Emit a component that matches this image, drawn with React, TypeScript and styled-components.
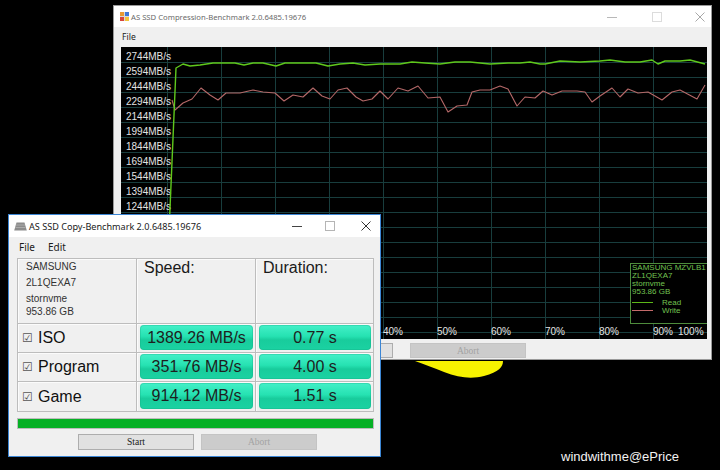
import React from 'react';
import styled, { createGlobalStyle } from 'styled-components';

const Global = createGlobalStyle`
  html, body { margin: 0; padding: 0; background: #000; }
  #root { width: 720px; height: 470px; }
`;

const Desktop = styled.div`
  position: relative;
  width: 720px;
  height: 470px;
  background: #000;
  overflow: hidden;
  font-family: "Liberation Sans", Arial, sans-serif;
`;

const Window = styled.div<{ $left: number; $top: number; $w: number; $h: number; $active?: boolean }>`
  position: absolute;
  left: ${p => p.$left}px;
  top: ${p => p.$top}px;
  width: ${p => p.$w}px;
  height: ${p => p.$h}px;
  box-sizing: border-box;
  background: #f0f0f0;
  border: 1px solid ${p => (p.$active ? '#3c86d4' : '#9a9a9a')};
  display: flex;
  flex-direction: column;
`;

const TitleBar = styled.div<{ $h: number; $pl: number }>`
  flex: none;
  height: ${p => p.$h}px;
  background: #fff;
  display: flex;
  align-items: center;
  padding-left: ${p => p.$pl}px;
`;

const TitleText = styled.span<{ $size: number; $color: string }>`
  margin-left: 2px;
  font-family: "Noto Sans", "Open Sans", sans-serif;
  font-size: ${p => p.$size}px;
  color: ${p => p.$color};
  white-space: nowrap;
`;

const Caption = styled.div<{ $pr: number }>`
  margin-left: auto;
  display: flex;
  align-items: center;
  padding-right: ${p => p.$pr}px;
`;

const CapIcon = styled.svg<{ $ml: number }>`
  display: block;
  margin-left: ${p => p.$ml}px;
`;

const MenuBar = styled.div<{ $h: number; $pl: number; $size: number }>`
  flex: none;
  height: ${p => p.$h}px;
  display: flex;
  align-items: center;
  gap: 13px;
  padding-left: ${p => p.$pl}px;
  font-family: "Noto Sans", "Open Sans", sans-serif;
  font-size: ${p => p.$size}px;
  color: #1a1a1a;
`;

const ChartBox = styled.div`
  flex: none;
  margin: 1px 0 0 7px;
  width: 586px;
  height: 292px;
  background: #000;
  svg { display: block; }
`;

const ButtonStrip = styled.div<{ $pl: number; $pt: number; $gap: number }>`
  display: flex;
  padding-left: ${p => p.$pl}px;
  padding-top: ${p => p.$pt}px;
  gap: ${p => p.$gap}px;
`;

const WinButton = styled.div<{ $disabled?: boolean; $h: number }>`
  width: 116px;
  height: ${p => p.$h}px;
  box-sizing: border-box;
  border: 1px solid ${p => (p.$disabled ? '#c4c4c4' : '#adadad')};
  background: ${p => (p.$disabled ? '#cccccc' : '#e1e1e1')};
  color: ${p => (p.$disabled ? '#a3a3a3' : '#1a1a1a')};
  font-family: "Liberation Serif", "Times New Roman", serif;
  font-size: 9.5px;
  display: flex;
  align-items: center;
  justify-content: center;
`;

const Content = styled.div`
  display: flex;
  flex-direction: column;
  padding: 2px 6px 0 8px;
`;

const Table = styled.div`
  display: grid;
  grid-template-columns: 118px 118px 117px;
  grid-template-rows: 64px 28px 28px 29px;
  gap: 1px;
  padding: 1px;
  background: #bdbdbd;
`;

const Cell = styled.div`
  background: #f0f0f0;
  box-shadow: inset 1px 1px 0 #fbfbfb;
  display: flex;
  box-sizing: border-box;
`;

const InfoCell = styled(Cell)`
  flex-direction: column;
  padding-left: 8px;
  font-size: 10px;
  color: #333;
  line-height: 16px;
`;

const InfoLast = styled.div`
  margin-top: -3px;
`;

const HeadCell = styled(Cell)`
  padding-left: 7px;
  font-size: 16px;
  line-height: 18px;
  color: #1a1a1a;
`;

const RowLabel = styled(Cell)`
  align-items: center;
  padding-left: 4px;
  font-size: 16px;
  color: #111;
`;

const Check = styled.span`
  font-family: "DejaVu Sans", sans-serif;
  font-size: 12px;
  color: #555;
  width: 16px;
`;

const ValueCell = styled(Cell)`
  padding: 1px 2px 2px 3px;
`;

const ValueBox = styled.div`
  flex: 1;
  border-radius: 4px;
  background: linear-gradient(#44f0c8 0%, #26e2b2 45%, #18cc9c 60%, #1bd2a2 100%);
  box-shadow: inset 0 0 0 1px rgba(20, 170, 130, 0.3);
  display: flex;
  align-items: center;
  justify-content: center;
  font-size: 16px;
  color: #1e1e1e;
`;

const Progress = styled.div`
  margin-top: 6px;
  height: 11px;
  box-sizing: border-box;
  border: 1px solid #bcbcbc;
  background: #06b025;
`;

const Blob = styled.svg`
  position: absolute;
  left: 414px;
  top: 358px;
`;

const Watermark = styled.div`
  position: absolute;
  left: 561px;
  top: 449px;
  font-size: 13px;
  color: #f2f2f2;
`;

const green: number[][] = [
  [169, 232], [176, 68], [183, 64], [190, 66], [200, 65], [213, 63], [223, 63], [235, 63], [244, 65],
  [253, 63], [263, 63], [276, 66], [285, 63], [300, 63], [316, 63], [328, 66], [340, 64], [353, 63],
  [365, 65], [380, 64], [390, 64], [400, 64], [412, 62], [425, 63], [440, 64], [455, 62], [470, 62],
  [480, 63], [490, 64], [508, 63], [520, 63], [530, 62], [540, 64], [545, 64], [560, 61], [580, 62],
  [600, 61], [610, 60], [625, 62], [640, 62], [652, 60], [658, 64], [665, 61], [680, 61], [690, 60],
  [705, 64],
];

const red: number[][] = [
  [172, 100], [175, 110], [183, 103], [192, 99], [201, 88], [210, 95], [218, 100], [226, 93], [240, 93],
  [253, 90], [263, 92], [275, 93], [284, 101], [293, 95], [303, 97], [313, 88], [322, 96], [330, 99],
  [338, 90], [347, 88], [356, 97], [363, 101], [372, 99], [380, 91], [388, 99], [398, 88], [408, 91],
  [418, 86], [428, 98], [440, 97], [448, 112], [457, 106], [467, 105], [472, 92], [480, 90], [490, 90],
  [500, 86], [508, 89], [517, 106], [525, 97], [535, 98], [543, 91], [552, 95], [562, 91], [577, 91],
  [585, 92], [592, 102], [600, 96], [612, 88], [620, 97], [628, 89], [638, 93], [648, 92], [662, 100],
  [672, 92], [680, 90], [697, 99], [705, 85],
];

const toPts = (arr: number[][]) => arr.map(([x, y]) => `${x - 121},${y - 47}`).join(' ');

const Chart: React.FC = () => {
  const hLines = Array.from({ length: 19 }, (_, k) => 15 + 15 * k);
  const vLines = Array.from({ length: 11 }, (_, k) => 46 + 54 * k);
  // only the axis labels that are not covered by the front window
  const labels = Array.from({ length: 11 }, (_, k) => `${2744 - 150 * k}MB/s`);
  const pct = Array.from({ length: 7 }, (_, i) => {
    const k = i + 4;
    return { t: `${k * 10}%`, x: k === 10 ? 557 : 46 + 54 * k };
  });
  return (
    <svg width={586} height={292} viewBox="0 0 586 292">
      <rect x={0} y={0} width={586} height={292} fill="#000" />
      {hLines.map(y => (
        <line key={'h' + y} x1={0} x2={586} y1={y + 0.5} y2={y + 0.5} stroke="#183d3d" strokeWidth={1} />
      ))}
      {vLines.map(x => (
        <line key={'v' + x} x1={x + 0.5} x2={x + 0.5} y1={0} y2={292} stroke="#183d3d" strokeWidth={1} />
      ))}
      <g fontFamily='"Liberation Sans", Arial, sans-serif' fontSize={10} fill="#e4e4e4">
        {labels.map((t, k) => (
          <text key={t} x={5} y={12.5 + 15 * k}>{t}</text>
        ))}
        {pct.map(p => (
          <text key={p.t} x={p.x} y={287.5}>{p.t}</text>
        ))}
      </g>
      <rect x={509.5} y={216.5} width={90} height={60} fill="#000" stroke="#4e8c3c" strokeWidth={1} />
      <g fontFamily='"Liberation Sans", Arial, sans-serif' fontSize={8} fill="#72c250">
        <text x={511} y={223}>SAMSUNG MZVLB1</text>
        <text x={511} y={231}>ZL1QEXA7</text>
        <text x={511} y={239}>stornvme</text>
        <text x={511} y={247}>953.86 GB</text>
        <text x={541} y={258}>Read</text>
        <text x={541} y={266}>Write</text>
      </g>
      <line x1={511} x2={532} y1={255.5} y2={255.5} stroke="#5cb818" strokeWidth={1} />
      <line x1={511} x2={532} y1={263.5} y2={263.5} stroke="#c46a6a" strokeWidth={1} />
      <polyline points={toPts(red)} fill="none" stroke="#b46868" strokeWidth={1.1} strokeLinejoin="round" />
      <polyline points={toPts(green)} fill="none" stroke="#5fc81c" strokeWidth={1.4} strokeLinejoin="round" />
    </svg>
  );
};

const MinIcon: React.FC<{ color: string; ml: number }> = ({ color, ml }) => (
  <CapIcon $ml={ml} width={10} height={10} viewBox="0 0 10 10">
    <line x1={0} x2={10} y1={5.5} y2={5.5} stroke={color} strokeWidth={1} />
  </CapIcon>
);
const MaxIcon: React.FC<{ color: string; ml: number }> = ({ color, ml }) => (
  <CapIcon $ml={ml} width={10} height={10} viewBox="0 0 10 10">
    <rect x={0.5} y={0.5} width={9} height={9} fill="none" stroke={color} strokeWidth={1} />
  </CapIcon>
);
const CloseIcon: React.FC<{ color: string; ml: number }> = ({ color, ml }) => (
  <CapIcon $ml={ml} width={10} height={10} viewBox="0 0 10 10">
    <path d="M0.5 0.5 L9.5 9.5 M9.5 0.5 L0.5 9.5" stroke={color} strokeWidth={1} />
  </CapIcon>
);

const AppIcon: React.FC = () => (
  <svg width={9} height={9} viewBox="0 0 9 9" style={{ display: 'block' }}>
    <rect x={0} y={0} width={9} height={9} fill="#d9d9d9" />
    <rect x={0} y={0} width={4} height={4} fill="#e89a32" />
    <rect x={5} y={0} width={4} height={4} fill="#3f78d6" />
    <rect x={0} y={5} width={4} height={4} fill="#d8463a" />
    <rect x={5} y={5} width={4} height={4} fill="#f2c53e" />
  </svg>
);

const DriveIcon: React.FC = () => (
  <svg width={13} height={9} viewBox="0 0 13 9" style={{ display: 'block' }}>
    <path d="M2.5 0.5 L10.5 0.5 L12.8 8.5 L0.2 8.5 Z" fill="#8c8c8c" />
    <path d="M2 3 L11 3 M1.4 5.5 L11.6 5.5" stroke="#b4b4b4" strokeWidth={0.8} />
  </svg>
);

const rows = [
  { name: 'ISO', speed: '1389.26 MB/s', dur: '0.77 s' },
  { name: 'Program', speed: '351.76 MB/s', dur: '4.00 s' },
  { name: 'Game', speed: '914.12 MB/s', dur: '1.51 s' },
];

export default function App() {
  return (
    <Desktop>
      <Global />
      <Window $left={113} $top={5} $w={599} $h={355}>
        <TitleBar $h={21} $pl={6}>
          <AppIcon />
          <TitleText $size={7.7} $color="#6a6a6a">AS SSD Compression-Benchmark 2.0.6485.19676</TitleText>
          <Caption $pr={6}>
            <MinIcon color="#b8b8b8" ml={0} />
            <MaxIcon color="#dcdcdc" ml={35} />
            <CloseIcon color="#a8a8a8" ml={33} />
          </Caption>
        </TitleBar>
        <MenuBar $h={19} $pl={8} $size={8.6}>
          <span>File</span>
        </MenuBar>
        <ChartBox>
          <Chart />
        </ChartBox>
        <ButtonStrip $pl={163} $pt={4} $gap={17}>
          <WinButton $h={15}>Start</WinButton>
          <WinButton $h={15} $disabled>Abort</WinButton>
        </ButtonStrip>
      </Window>

      <Blob width={96} height={24} viewBox="0 0 96 24">
        <path d="M1 3 L89 3 C89 9 85 14 70 18 C58 21 45 20 30 14 C20 10 10 6 1 3 Z" fill="#f7f200" />
      </Blob>

      <Window $left={8} $top={214} $w={373} $h={243} $active>
        <TitleBar $h={22} $pl={5}>
          <DriveIcon />
          <TitleText $size={9.1} $color="#1a1a1a">AS SSD Copy-Benchmark 2.0.6485.19676</TitleText>
          <Caption $pr={9}>
            <MinIcon color="#444" ml={0} />
            <MaxIcon color="#b5b5b5" ml={23} />
            <CloseIcon color="#333" ml={26} />
          </Caption>
        </TitleBar>
        <MenuBar $h={19} $pl={10} $size={10}>
          <span>File</span>
          <span>Edit</span>
        </MenuBar>
        <Content>
          <Table>
            <InfoCell>
              <div>SAMSUNG</div>
              <div>2L1QEXA7</div>
              <div>stornvme</div>
              <InfoLast>953.86 GB</InfoLast>
            </InfoCell>
            <HeadCell>Speed:</HeadCell>
            <HeadCell>Duration:</HeadCell>
            {rows.map(r => (
              <React.Fragment key={r.name}>
                <RowLabel>
                  <Check>☑</Check>
                  {r.name}
                </RowLabel>
                <ValueCell>
                  <ValueBox>{r.speed}</ValueBox>
                </ValueCell>
                <ValueCell>
                  <ValueBox>{r.dur}</ValueBox>
                </ValueCell>
              </React.Fragment>
            ))}
          </Table>
          <Progress />
          <ButtonStrip $pl={61} $pt={5} $gap={7}>
            <WinButton $h={16}>Start</WinButton>
            <WinButton $h={16} $disabled>Abort</WinButton>
          </ButtonStrip>
        </Content>
      </Window>

      <Watermark>windwithme@ePrice</Watermark>
    </Desktop>
  );
}
